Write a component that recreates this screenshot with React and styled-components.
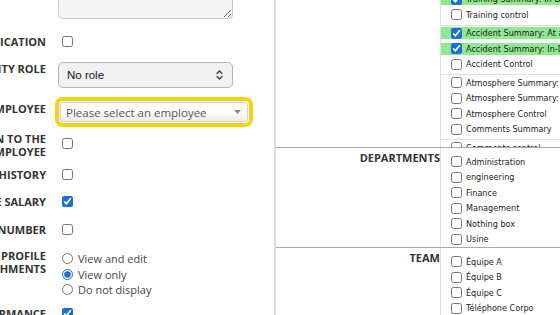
import React from 'react';
import styled, { createGlobalStyle } from 'styled-components';

const GlobalStyle = createGlobalStyle`
  * { box-sizing: border-box; }
  html, body { margin: 0; padding: 0; background: #fff; overflow: hidden; }
  body { font-family: "Open Sans", sans-serif; color: #333; }
`;

const topGroups = [
  [
    { name: 'Training Summary: At a glance', on: true },
    { name: 'Training Summary: In-Depth', on: true },
    { name: 'Training control' },
  ],
  [
    { name: 'Accident Summary: At a glance', on: true },
    { name: 'Accident Summary: In-Depth', on: true },
    { name: 'Accident Control' },
  ],
  [
    { name: 'Atmosphere Summary: At a glance' },
    { name: 'Atmosphere Summary: In-Depth' },
    { name: 'Atmosphere Control' },
    { name: 'Comments Summary' },
  ],
  [{ name: 'Comments control' }],
];

const departments = ['Administration', 'engineering', 'Finance', 'Management', 'Nothing box', 'Usine'];
const teams = ['Équipe A', 'Équipe B', 'Équipe C', 'Téléphone Corpo'];

function Chevrons() {
  return (
    <svg width="7" height="12" viewBox="0 0 7 12" fill="none" stroke="#333" strokeWidth="1.2" strokeLinecap="round" strokeLinejoin="round">
      <path d="M1 4.5 L3.5 2 L6 4.5" />
      <path d="M1 7.5 L3.5 10 L6 7.5" />
    </svg>
  );
}

function Caret() {
  return (
    <svg width="7" height="4" viewBox="0 0 7 4">
      <polygon points="0,0 7,0 3.5,4" fill="#8a8a8a" />
    </svg>
  );
}

function App() {
  return (
    <>
      <GlobalStyle />
      <Page>
        <FormPanel>
          <FormRow $gap={0}>
            <Label />
            <Control><NotesArea defaultValue="" /></Control>
          </FormRow>
          <FormRow $gap={16}>
            <Label>TWO-FACTOR AUTHENTICATION</Label>
            <Control><Check type="checkbox" /></Control>
          </FormRow>
          <FormRow>
            <Label>SECURITY ROLE</Label>
            <Control>
              <SelectBox>No role<Chevrons /></SelectBox>
            </Control>
          </FormRow>
          <FormRow>
            <Label>LINKED EMPLOYEE</Label>
            <Control>
              <EmployeeSelect>Please select an employee<Caret /></EmployeeSelect>
            </Control>
          </FormRow>
          <FormRow $gap={10}>
            <Label>SEND NOTIFICATION TO THE<br />EMPLOYEE</Label>
            <Control $pad={6}><Check type="checkbox" /></Control>
          </FormRow>
          <FormRow $gap={10}>
            <Label>SALARY HISTORY</Label>
            <Control><Check type="checkbox" /></Control>
          </FormRow>
          <FormRow>
            <Label>SEE SALARY</Label>
            <Control><Check type="checkbox" defaultChecked /></Control>
          </FormRow>
          <FormRow $gap={15}>
            <Label>SOCIAL SECURITY NUMBER</Label>
            <Control><Check type="checkbox" /></Control>
          </FormRow>
          <FormRow $gap={13}>
            <Label>EMPLOYEE PROFILE<br />ATTACHMENTS</Label>
            <RadioGroup>
              <RadioOption><Radio type="radio" name="att" />View and edit</RadioOption>
              <RadioOption><Radio type="radio" name="att" defaultChecked />View only</RadioOption>
              <RadioOption><Radio type="radio" name="att" />Do not display</RadioOption>
            </RadioGroup>
          </FormRow>
          <FormRow $gap={9}>
            <Label>PERFORMANCE</Label>
            <Control><Check type="checkbox" defaultChecked /></Control>
          </FormRow>
        </FormPanel>

        <PermPanel>
          <PermSection>
            <SectionLabel />
            <ListColumn $height={177}>
              {topGroups.map((group, i) => (
                <PermGroup key={i}>
                  {group.map((item) => (
                    <PermRow key={item.name}>
                      <PermItem $granted={item.on}>
                        <ListCheck type="checkbox" defaultChecked={!!item.on} />
                        {item.name}
                      </PermItem>
                    </PermRow>
                  ))}
                </PermGroup>
              ))}
            </ListColumn>
          </PermSection>

          <PermSection>
            <SectionLabel>DEPARTMENTS</SectionLabel>
            <ListColumn>
              {departments.map((d) => (
                <PermRow key={d}>
                  <PermItem><ListCheck type="checkbox" />{d}</PermItem>
                </PermRow>
              ))}
            </ListColumn>
          </PermSection>

          <PermSection>
            <SectionLabel>TEAM</SectionLabel>
            <ListColumn>
              {teams.map((t) => (
                <PermRow key={t}>
                  <PermItem><ListCheck type="checkbox" />{t}</PermItem>
                </PermRow>
              ))}
            </ListColumn>
          </PermSection>
        </PermPanel>
      </Page>
    </>
  );
}

export default App;

const Page = styled.div`
  display: flex;
  align-items: stretch;
  width: 900px;
  margin: -30px 0 0 -160px;
`;

const FormPanel = styled.div`
  flex: none;
  width: 436px;
  padding: 6px 0 40px 4px;
  border-right: 2px solid #dcdcdc;
`;

const FormRow = styled.div`
  display: grid;
  grid-template-columns: 202px 1fr;
  column-gap: 12px;
  align-items: start;
  margin-top: ${(p) => p.$gap ?? 14}px;
`;

const Label = styled.div`
  font-family: "Open Sans", sans-serif;
  font-weight: 700;
  font-size: 11px;
  line-height: 13px;
  color: #333;
  text-align: right;
  white-space: nowrap;
`;

const Control = styled.div`
  display: flex;
  align-items: center;
  min-height: 13px;
  padding-top: ${(p) => p.$pad ?? 0}px;
`;

const NotesArea = styled.textarea`
  display: block;
  width: 175px;
  height: 43px;
  margin: 0;
  border: 1px solid #c9c9c9;
  border-radius: 4px;
  background: #f5f5f5;
`;

const Check = styled.input`
  width: 11px;
  height: 11px;
  margin: 0 0 0 4px;
  accent-color: #1a6fd8;
`;

const SelectBox = styled.div`
  width: 175px;
  height: 26px;
  display: flex;
  align-items: center;
  justify-content: space-between;
  padding: 0 9px 0 8px;
  border: 1px solid #b5b5b5;
  border-radius: 5px;
  background: #f1f1f1;
  font-family: "Liberation Sans", Arial, sans-serif;
  font-size: 11.5px;
  color: #111;
`;

const EmployeeSelect = styled.div`
  width: 188px;
  height: 20px;
  margin-left: 2px;
  display: flex;
  align-items: center;
  justify-content: space-between;
  padding: 0 6px 0 5px;
  border: 1px solid #d2d2d2;
  border-radius: 3px;
  background: linear-gradient(#ffffff 0%, #ffffff 45%, #ececec 100%);
  box-shadow: 0 0 0 1px #fff, 0 0 0 5px #f6d40c;
  font-family: "Open Sans", sans-serif;
  font-size: 11.5px;
  color: #555;
`;

const RadioGroup = styled.div`
  display: flex;
  flex-direction: column;
  padding-top: 2px;
`;

const RadioOption = styled.label`
  display: flex;
  align-items: center;
  gap: 5px;
  height: 15.5px;
  font-family: "Open Sans", sans-serif;
  font-size: 11px;
  color: #444;
`;

const Radio = styled.input`
  width: 11px;
  height: 11px;
  margin: 0 0 0 4px;
  accent-color: #1a6fd8;
`;

const PermPanel = styled.div`
  flex: none;
  width: 420px;
`;

const PermSection = styled.div`
  display: grid;
  grid-template-columns: 164px 1fr;
  border-bottom: 1px solid #a9a9a9;
`;

const SectionLabel = styled.div`
  padding-top: 3px;
  font-family: "Open Sans", sans-serif;
  font-weight: 700;
  font-size: 11px;
  line-height: 13px;
  color: #333;
  text-align: right;
`;

const ListColumn = styled.div`
  display: flex;
  flex-direction: column;
  padding-top: 6px;
  border-left: 1px solid #e0e0e0;
  height: ${(p) => (p.$height ? `${p.$height}px` : 'auto')};
  overflow: hidden;
`;

const PermGroup = styled.div`
  display: flex;
  flex-direction: column;
  flex: none;
  padding-bottom: 2px;
  border-bottom: 1px solid #dedede;
`;

const PermRow = styled.div`
  flex: none;
  padding: 1.75px 0;
`;

const PermItem = styled.label`
  display: flex;
  align-items: center;
  gap: 4px;
  height: 12px;
  padding-left: 10px;
  background: ${(p) => (p.$granted ? '#90e890' : 'transparent')};
  font-family: "DejaVu Sans Condensed", "DejaVu Sans", sans-serif;
  font-stretch: condensed;
  font-size: 9px;
  color: #222;
  white-space: nowrap;
`;

const ListCheck = styled.input`
  width: 11px;
  height: 11px;
  margin: 0;
  flex: none;
  accent-color: #1a6fd8;
`;
